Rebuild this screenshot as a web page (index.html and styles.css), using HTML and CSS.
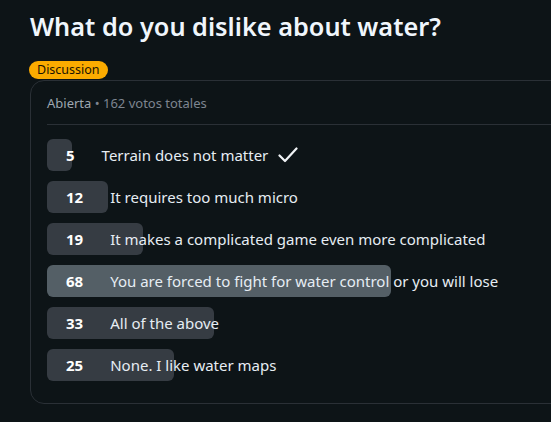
FILE: index.html
```html
<!DOCTYPE html>
<html lang="es">
<head>
    <meta charset="UTF-8">
    <meta name="viewport" content="width=device-width, initial-scale=1.0">
    <title>Encuesta</title>
    <link rel="stylesheet" href="styles.css">
</head>
<body>
    <!-- Título de la discusión -->
    <h1 class="title">What do you dislike about water?</h1>
    <span class="label">Discussion</span>

    <!-- Caja de la encuesta -->
    <div class="poll">
        <div class="poll-header">
            <span class="state">Abierta</span> &bull; 162 votos totales
        </div>

        <ul class="options">
            <li class="option">
                <span class="bar" style="width: 3.09%"></span>
                <span class="votes">5</span>
                <span class="text">Terrain does not matter</span>
                <svg class="check" width="20" height="16" viewBox="0 0 20 16">
                    <polyline points="1.5,8.5 7,14 18.5,1.5" fill="none" stroke="#f0f3f6" stroke-width="2.2" stroke-linecap="round" stroke-linejoin="round"/>
                </svg>
            </li>
            <li class="option">
                <span class="bar" style="width: 7.41%"></span>
                <span class="votes">12</span>
                <span class="text">It requires too much micro</span>
            </li>
            <li class="option">
                <span class="bar" style="width: 11.73%"></span>
                <span class="votes">19</span>
                <span class="text">It makes a complicated game even more complicated</span>
            </li>
            <li class="option top">
                <span class="bar" style="width: 41.98%"></span>
                <span class="votes">68</span>
                <span class="text">You are forced to fight for water control or you will lose</span>
            </li>
            <li class="option">
                <span class="bar" style="width: 20.37%"></span>
                <span class="votes">33</span>
                <span class="text">All of the above</span>
            </li>
            <li class="option">
                <span class="bar" style="width: 15.43%"></span>
                <span class="votes">25</span>
                <span class="text">None. I like water maps</span>
            </li>
        </ul>
    </div>
</body>
</html>
```

FILE: styles.css
```css
/* Estilos generales */
body {
    font-family: 'Noto Sans', 'Open Sans', sans-serif;
    margin: 0;
    padding: 0 0 0 30px;
    background-color: #0d1417;
    color: #e6edf3;
    overflow: hidden;
}

/* Título */
.title {
    margin: 0;
    padding-top: 8px;
    font-size: 25.3px;
    font-weight: 600;
    line-height: 36px;
    color: #f0f6fc;
}

/* Etiqueta */
.label {
    display: inline-block;
    margin: 17px 0 0 -1px;
    padding: 0 8px;
    height: 18px;
    line-height: 18px;
    font-size: 12.5px;
    color: #1c1400;
    background-color: #fbab00;
    border-radius: 9px;
}

/* Caja de la encuesta */
.poll {
    box-sizing: border-box;
    width: 854px;
    margin-top: 1px;
    padding: 0 16px 12px;
    border: 1px solid #2a3036;
    border-radius: 14px;
}

.poll-header {
    height: 43px;
    line-height: 44px;
    font-size: 13px;
    color: #7d8590;
    border-bottom: 1px solid #2a3036;
}

.poll-header .state {
    color: #9ea7b0;
}

/* Opciones */
.options {
    list-style: none;
    margin: 0;
    padding: 14px 0 0;
}

.option {
    position: relative;
    display: flex;
    align-items: center;
    height: 32px;
    margin-bottom: 10px;
    font-size: 15px;
}

.bar {
    position: absolute;
    left: 0;
    top: 0;
    bottom: 0;
    background-color: #363c43;
    border-radius: 6px;
}

.option.top .bar {
    background-color: #545f66;
}

.votes {
    position: relative;
    padding-left: 19px;
    margin-right: 27px;
    font-weight: 700;
    color: #ffffff;
}

.text {
    position: relative;
    color: #e6edf3;
}

.check {
    position: relative;
    margin-left: 10px;
}
```
